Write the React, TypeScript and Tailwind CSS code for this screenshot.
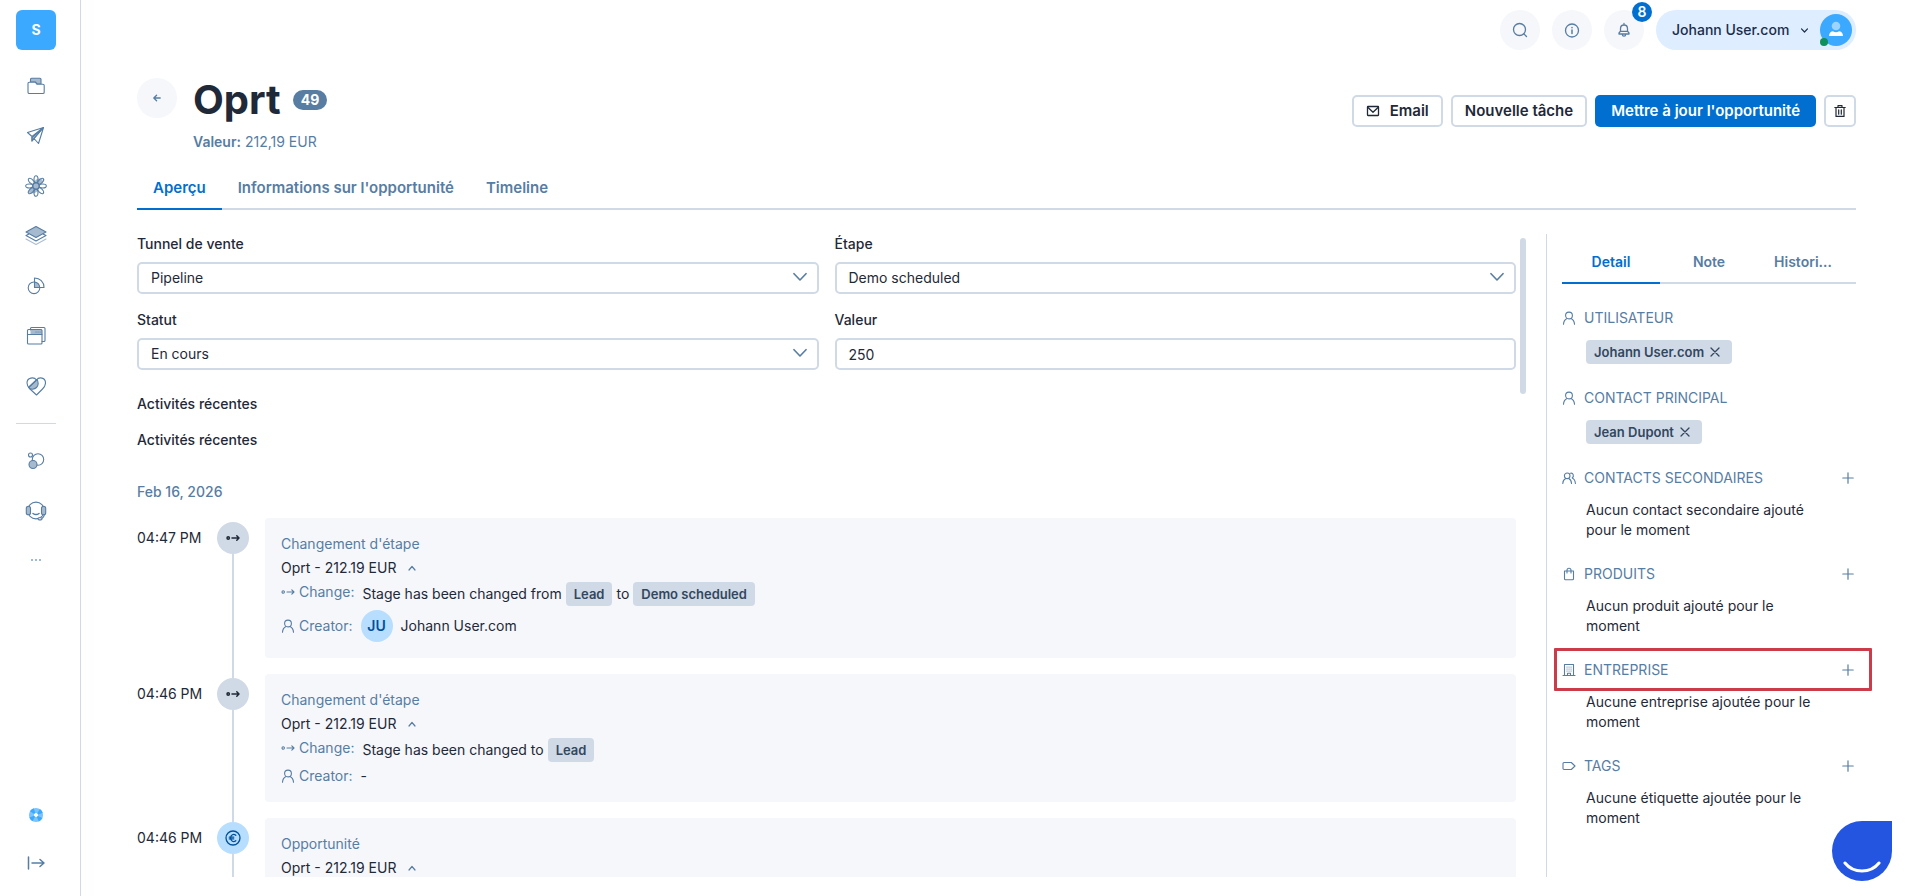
import type { ReactNode } from 'react';

type IconProps = { children: ReactNode; className?: string; box?: string; stroke?: number };

function Icon({ children, className = 'size-5', box = '0 0 20 20', stroke = 1.1 }: IconProps) {
  return (
    <svg
      viewBox={box}
      className={className}
      fill="none"
      stroke="currentColor"
      strokeWidth={stroke}
      strokeLinecap="round"
      strokeLinejoin="round"
      aria-hidden="true"
    >
      {children}
    </svg>
  );
}

const tint = '#a6bace';

const PersonIcon = ({ className = 'size-3.5' }: { className?: string }) => (
  <Icon className={className} box="0 0 14 14">
    <circle cx="7" cy="4.500" r="3.400" />
    <path d="M1.500 13.200c.2-3 1.600-4.800 3.600-5.700M12.500 13.200c-.2-3-1.600-4.800-3.600-5.700" />
  </Icon>
);

const PeopleIcon = () => (
  <Icon className="size-3.5" box="0 0 14 14">
    <circle cx="5.200" cy="4.800" r="2.800" />
    <path d="M.8 12.500c.1-2.600 1.200-4.200 2.900-5M9.500 12.500c-.1-2.600-1.100-4.200-2.800-5M8.500 2.200c2.600-.6 4 2.800 1.700 4.700 2 .9 3 2.600 3.200 5.600" />
  </Icon>
);

const BagIcon = () => (
  <Icon className="size-3.5" box="0 0 14 14">
    <path d="M2.500 4h9v7.700a1 1 0 0 1-1 1h-7a1 1 0 0 1-1-1zM5 6V3.300a2 2 0 0 1 4 0V6" />
  </Icon>
);

const BuildingIcon = () => (
  <Icon className="size-3.5" box="0 0 14 14">
    <path d="M1 12.500h12M2.500 12.500v-11h9v11M5.500 12.500v-2.300h3v2.300" />
    <path d="M5 4h.1M7 4h.1M9 4h.1M5 6h.1M7 6h.1M9 6h.1M5 8h.1M7 8h.1M9 8h.1" />
  </Icon>
);

const TagIcon = () => (
  <Icon className="size-3.5" box="0 0 14 14">
    <path d="M2 3.500h7.300L13 7l-3.700 3.500H2a1 1 0 0 1-1-1v-5a1 1 0 0 1 1-1z" />
  </Icon>
);

const StageIcon = ({ stroke = 1.1 }: { stroke?: number }) => (
  <Icon className="size-3.5" box="0 0 14 14" stroke={stroke}>
    <circle cx="2.200" cy="7" r="1.200" />
    <path d="M6 7h7M10.800 4.800 13 7l-2.200 2.200" />
  </Icon>
);

const ChevronDown = ({ className = 'size-3.5', stroke = 1.6 }: { className?: string; stroke?: number }) => (
  <Icon className={className} box="0 0 14 14" stroke={stroke}>
    <path d="M1 3.700l6 6.300 6-6.300" />
  </Icon>
);

const navIcons: { label: string; icon: ReactNode }[] = [
  {
    label: 'Dossiers',
    icon: (
      <Icon>
        <path d="M4.500 6V3.300a1 1 0 0 1 1-1h8.500a1 1 0 0 1 1 1V8h-4l-1.500-2z" fill={tint} />
        <path d="M2 7.500a1.300 1.300 0 0 1 1.300-1.300h6l1.600 2h6a1.300 1.300 0 0 1 1.300 1.300v6.700a1.300 1.300 0 0 1-1.300 1.300H3.300A1.300 1.300 0 0 1 2 16.200z" fill="#fff" />
      </Icon>
    ),
  },
  {
    label: 'Campagnes',
    icon: (
      <Icon>
        <path d="M17.500 1.500 6 11.500v3.500z" fill={tint} />
        <path d="M17.500 1.500 1.500 6.500 6 10.500zM17.500 1.500 12.500 17.500 8 12.500zM6 10.500V15l2-2.500" />
      </Icon>
    ),
  },
  {
    label: 'Automatisations',
    icon: (
      <Icon className="size-[22px]" box="0 0 22 22">
        <path d="M4.300 17.700c-1.500-2 .5-4.700 2.700-6.200 1.500-4.500 4-8 7.500-8 3.500 0 4 3 2 5.500-1 1.300-2 1.500-2 3-1.500 4-4 8-10.200 5.700z" fill={tint} stroke="none" />
        {[0, 45, 90, 135, 180, 225, 270, 315].map((a) => (
          <ellipse key={a} cx="11" cy="4.300" rx="2" ry="3.600" transform={`rotate(${a} 11 11)`} />
        ))}
        <circle cx="11" cy="11" r="3.200" />
      </Icon>
    ),
  },
  {
    label: 'Contenus',
    icon: (
      <Icon className="size-[22px]" box="0 0 22 22">
        <path d="M1 14l10 5.500L21 14" opacity=".5" />
        <path d="M3.500 9.200 1 10.500 11 16l10-5.500-2.500-1.300" />
        <path d="M11 1.500 21 7l-10 5.500L1 7z" fill={tint} />
      </Icon>
    ),
  },
  {
    label: 'Analyses',
    icon: (
      <Icon>
        <path d="M8.500 5.500a6 6 0 0 1 5.500 6H8.500z" fill={tint} stroke="none" />
        <circle cx="8" cy="11.800" r="5.800" />
        <path d="M8.500 2a9.300 9.300 0 0 1 9.500 9.500H8.500z" />
      </Icon>
    ),
  },
  {
    label: 'Pages',
    icon: (
      <Icon>
        <path d="M4.500 4V2.500a1 1 0 0 1 1-1H18a1 1 0 0 1 1 1v12a1 1 0 0 1-1 1h-2" />
        <path d="M4.500 3.500H16V8H4.500z" fill={tint} stroke="none" />
        <rect x="1.500" y="3.500" width="14.500" height="14.500" rx="1" />
        <path d="M1.500 8.500H16" />
        <path d="M10 6h.1M12 6h.1M14 6h.1" />
      </Icon>
    ),
  },
  {
    label: 'Fidélité',
    icon: (
      <Icon>
        <path d="M2.500 11.500 11 3.500c1.800 2.500 1.500 6-.5 8s-6 2.500-8 0z" fill={tint} />
        <path d="M10.500 4C8 .5 1 1.500 1 7c0 3 1.500 4.500 3 6l6.500 6 6-6c1.500-1.500 3-3 3-6C19.500 1.500 13 .5 10.500 4z" />
        <path d="M2.500 11.500 10 4.500" />
      </Icon>
    ),
  },
];

const extraIcons: { label: string; icon: ReactNode }[] = [
  {
    label: 'Intégrations',
    icon: (
      <Icon>
        <circle cx="12" cy="8.500" r="5.700" />
        <circle cx="4.500" cy="4" r="2" />
        <circle cx="7" cy="13.500" r="4" fill={tint} />
      </Icon>
    ),
  },
  {
    label: 'Assistance',
    icon: (
      <Icon className="size-[22px]" box="0 0 22 22">
        <circle cx="11" cy="10.500" r="8.400" />
        <rect x="1.300" y="6.200" width="4.200" height="8.600" rx="2.100" fill={tint} />
        <rect x="16.500" y="6.200" width="4.200" height="8.600" rx="2.100" fill={tint} />
        <path d="M8 13.500c1.800 1.300 4.200 1.300 6 0" strokeWidth="1.500" />
        <path d="M19.500 14.500c-.5 2.500-2 4-4 4.500" />
        <rect x="13" y="17.700" width="4" height="2.200" rx="1.100" fill="#fff" />
      </Icon>
    ),
  },
];

function Sidebar() {
  return (
    <nav aria-label="Navigation principale" className="flex w-[81px] shrink-0 flex-col border-r border-[#d0dae6] pr-2 pt-2.5">
      <a href="#accueil" className="flex size-10 items-center justify-center self-center rounded-md bg-[#3ba9ff] text-sm font-bold text-white">
        S
      </a>
      <div className="mt-[11px] flex flex-col items-center">
        {navIcons.map(({ label, icon }) => (
          <a key={label} href="#nav" aria-label={label} className="flex h-[50px] w-10 items-center justify-center text-[#577da3]">
            {icon}
          </a>
        ))}
      </div>
      <hr className="mx-4 mt-3 border-[#d0dae6]" />
      <div className="mt-3 flex flex-col items-center">
        {extraIcons.map(({ label, icon }) => (
          <a key={label} href="#nav" aria-label={label} className="flex h-[50px] w-10 items-center justify-center text-[#577da3]">
            {icon}
          </a>
        ))}
        <button type="button" aria-label="Plus" className="flex h-12 w-10 items-center justify-center text-[#9dbbd8]">
          <Icon className="size-3" box="0 0 12 12" stroke={2}>
            <path d="M2 6h.01M6 6h.01M10 6h.01" strokeLinecap="square" />
          </Icon>
        </button>
      </div>
      <div className="mt-auto flex flex-col items-center pb-[9px]">
        <button type="button" aria-label="Aide" className="flex size-12 items-center justify-center">
          <svg viewBox="0 0 16 16" className="size-4" fill="none" aria-hidden="true">
            <circle cx="8" cy="8" r="4.600" stroke="#7cc4ff" strokeWidth="5" />
            <circle cx="8" cy="8" r="4.600" stroke="#3ba9ff" strokeWidth="5" strokeDasharray="3 4.226" strokeDashoffset="-2.100" />
          </svg>
        </button>
        <button type="button" aria-label="Déplier le menu" className="flex size-12 items-center justify-center text-[#577da3]">
          <Icon className="size-5" stroke={1.5}>
            <path d="M2.500 4v12M6 10h12M14 6.500l4 3.500-4 3.500" />
          </Icon>
        </button>
      </div>
    </nav>
  );
}

function TopBar() {
  const round = 'relative flex size-10 items-center justify-center rounded-full bg-[#f5f7fb] text-[#577da3]';
  return (
    <header className="flex justify-end gap-3 pt-2.5">
      <button type="button" aria-label="Rechercher" className={round}>
        <Icon className="size-4" box="0 0 16 16" stroke={1.3}>
          <circle cx="7.500" cy="7.500" r="6" />
          <path d="M11.900 11.900 14.500 14.500" />
        </Icon>
      </button>
      <button type="button" aria-label="Informations" className={round}>
        <Icon className="size-4" box="0 0 16 16" stroke={1.3}>
          <circle cx="8" cy="8.500" r="6.500" />
          <path d="M8 8v3.500M8 5.500v.2" strokeWidth="1.500" />
        </Icon>
      </button>
      <button type="button" aria-label="Notifications" className={round}>
        <Icon className="size-4" box="0 0 16 16" stroke={1.3}>
          <path d="M8 1.500V3M8 3C5.700 3 4.500 4.700 4.500 6.700v2.500L3 11v1h10v-1l-1.500-1.800V6.700C11.500 4.700 10.300 3 8 3zM4.500 9.300h7M6.300 12.300c0 2.500 3.400 2.500 3.400 0" />
        </Icon>
        <span className="absolute -right-2 -top-2 flex size-5 items-center justify-center rounded-full bg-[#006fcf] text-sm font-semibold text-white">8</span>
      </button>
      <button type="button" className="flex h-10 w-[200px] items-center justify-between rounded-full bg-[#deedff] pl-4 pr-1 text-sm font-medium text-[#1a2e4a]">
        Johann User.com
        <span className="flex items-center gap-3">
          <ChevronDown className="size-[7px]" stroke={2.400} />
          <span className="relative">
            <svg viewBox="0 0 32 32" className="size-8" aria-hidden="true">
              <circle cx="16" cy="16" r="16" fill="#3ba9ff" />
              <circle cx="16" cy="12" r="4.300" fill="#9dd3ff" />
              <path d="M9 22c0-3 2-4.700 4-4.700 2 1.200 4 1.200 6 0 2 0 4 1.700 4 4.700z" fill="#fff" />
            </svg>
            <span className="absolute bottom-0 left-0 size-2 rounded-full bg-[#0f8f5b]" />
          </span>
        </span>
      </button>
    </header>
  );
}

function Heading() {
  const outlined = 'flex h-8 items-center rounded-[5px] border-2 border-[#d0dae6] bg-white text-[#1f2937]';
  return (
    <div className="mt-7 flex items-start justify-between">
      <div className="flex gap-4">
        <a href="#retour" aria-label="Retour" className="flex size-10 items-center justify-center rounded-full bg-[#f5f7fb] text-[#577da3]">
          <Icon className="size-2" box="0 0 10 10" stroke={1.600}>
            <path d="M9 5H1.500M4.500 1.500 1 5l3.500 3.500" />
          </Icon>
        </a>
        <div>
          <div className="flex h-11 items-center gap-3">
            <h1 className="text-[40px] font-bold leading-11 text-[#1f2937]">Oprt</h1>
            <span className="flex h-5 items-center rounded-full bg-[#577da3] px-2 text-sm font-bold text-white">49</span>
          </div>
          <p className="mt-2.5 text-sm text-[#577da3]">
            <strong className="font-semibold">Valeur:</strong> 212,19 EUR
          </p>
        </div>
      </div>
      <div className="mt-[17px] flex gap-2 text-[15px] font-semibold">
        <button type="button" className={`${outlined} gap-2.5 px-3`}>
          <Icon className="size-3.5" box="0 0 14 14" stroke={1.300}>
            <rect x="1.500" y="2.500" width="11" height="9" rx=".5" />
            <path d="M2 3.500 7 8.300l5-4.800" />
          </Icon>
          Email
        </button>
        <button type="button" className={`${outlined} px-3`}>Nouvelle tâche</button>
        <button type="button" className="h-8 rounded-[5px] bg-[#006fcf] px-4 text-white">Mettre à jour l'opportunité</button>
        <button type="button" aria-label="Supprimer" className={`${outlined} w-8 justify-center`}>
          <Icon className="size-3.5" box="0 0 14 14" stroke={1.200}>
            <path d="M1.800 3.500h10.400M5 3.500V1.600h4v1.900M3 3.500v8.900h8V3.500M5.700 5.800v4.400M8.300 5.800v4.400" />
          </Icon>
        </button>
      </div>
    </div>
  );
}

function Tabs() {
  return (
    <div role="tablist" className="mt-3.5 flex shrink-0 border-b-2 border-[#d0dae6] text-[15px] font-semibold text-[#577da3]">
      <button type="button" role="tab" aria-selected="true" className="-mb-0.5 h-11 border-b-2 border-[#006fcf] px-4 pt-0.5 text-[#006fcf]">
        Aperçu
      </button>
      <button type="button" role="tab" className="-mb-0.5 h-11 border-b-2 border-transparent px-4 pt-0.5">Informations sur l'opportunité</button>
      <button type="button" role="tab" className="-mb-0.5 h-11 border-b-2 border-transparent px-4 pt-0.5">Timeline</button>
    </div>
  );
}

const fieldBox = 'h-8 w-full appearance-none rounded-[5px] border-2 border-[#d0dae6] bg-white px-3 text-sm text-[#1f2937]';

function SelectField({ id, label, value }: { id: string; label: string; value: string }) {
  return (
    <div>
      <label htmlFor={id} className="block text-sm font-medium">{label}</label>
      <div className="relative mt-2">
        <select id={id} defaultValue={value} className={fieldBox}>
          <option>{value}</option>
        </select>
        <span className="pointer-events-none absolute right-3 top-2 text-[#577da3]">
          <ChevronDown />
        </span>
      </div>
    </div>
  );
}

const Chip = ({ children }: { children: ReactNode }) => (
  <span className="inline-flex h-6 items-center rounded bg-[#d0dae6] px-2 text-[13px] font-semibold text-[#33475f]">{children}</span>
);

type EventProps = { time: string; title: string; tone: 'grey' | 'blue'; icon: ReactNode; children?: ReactNode };

function Event({ time, title, tone, icon, children }: EventProps) {
  return (
    <li className="group flex">
      <time className="mt-2.5 w-20 shrink-0 text-sm">{time}</time>
      <div className="flex w-8 shrink-0 flex-col items-center">
        <span className="h-1 w-0.5 bg-[#d0dae6] group-first:bg-transparent" />
        <span className={`flex size-8 items-center justify-center rounded-full ${tone === 'blue' ? 'bg-[#b8deff] text-[#00509a]' : 'bg-[#d0dae6] text-[#1f2937]'}`}>
          {icon}
        </span>
        <span className="w-0.5 flex-1 bg-[#d0dae6]" />
      </div>
      <div className="min-w-0 flex-1 pb-4 pl-4">
        <div className="flex flex-col gap-1 rounded bg-[#f5f7fb] p-4 text-sm">
          <p className="text-[#577da3]">{title}</p>
          <button type="button" className="flex h-5 items-center gap-3">
            Oprt - 212.19 EUR
            <Icon className="size-2 text-[#577da3]" box="0 0 8 8" stroke={1.200}>
              <path d="M1 6 4 2.500 7 6" />
            </Icon>
          </button>
          {children}
        </div>
      </div>
    </li>
  );
}

const RowLabel = ({ icon, children }: { icon: ReactNode; children: ReactNode }) => (
  <span className="flex h-5 items-center gap-1 text-[#577da3]">
    {icon}
    {children}
  </span>
);

function Timeline() {
  return (
    <ol className="mt-4">
      <Event time="04:47 PM" title="Changement d'étape" tone="grey" icon={<StageIcon stroke={1.500} />}>
        <div className="flex items-start gap-2">
          <RowLabel icon={<StageIcon />}>Change:</RowLabel>
          <span className="flex items-center gap-1">
            Stage has been changed from <Chip>Lead</Chip> to <Chip>Demo scheduled</Chip>
          </span>
        </div>
        <div className="flex items-center gap-2">
          <RowLabel icon={<PersonIcon />}>Creator:</RowLabel>
          <span className="flex size-8 items-center justify-center rounded-full bg-[#b8deff] font-semibold text-[#00509a]">JU</span>
          Johann User.com
        </div>
      </Event>
      <Event time="04:46 PM" title="Changement d'étape" tone="grey" icon={<StageIcon stroke={1.500} />}>
        <div className="flex items-start gap-2">
          <RowLabel icon={<StageIcon />}>Change:</RowLabel>
          <span className="flex items-center gap-1">
            Stage has been changed to <Chip>Lead</Chip>
          </span>
        </div>
        <div className="flex items-center gap-2">
          <RowLabel icon={<PersonIcon />}>Creator:</RowLabel>-
        </div>
      </Event>
      <Event
        time="04:46 PM"
        title="Opportunité"
        tone="blue"
        icon={
          <Icon className="size-4" box="0 0 16 16" stroke={1.300}>
            <circle cx="8" cy="8" r="7" />
            <path d="M10.800 5.300C8.500 3.300 5.600 5 5.600 8s2.900 4.700 5.200 2.700M4.300 7.200h4.400M4.300 8.900h4.400" />
          </Icon>
        }
      />
    </ol>
  );
}

function Overview() {
  return (
    <div className="flex min-w-0 flex-1 gap-1">
      <div className="min-w-0 flex-1 overflow-hidden">
        <div className="grid grid-cols-2 gap-4">
          <SelectField id="tunnel" label="Tunnel de vente" value="Pipeline" />
          <SelectField id="etape" label="Étape" value="Demo scheduled" />
          <SelectField id="statut" label="Statut" value="En cours" />
          <div>
            <label htmlFor="valeur" className="block text-sm font-medium">Valeur</label>
            <input id="valeur" type="text" defaultValue="250" className={`${fieldBox} mt-2 block`} />
          </div>
        </div>
        <h2 className="mt-6 text-sm font-medium">Activités récentes</h2>
        <h3 className="mt-4 text-sm font-medium">Activités récentes</h3>
        <p className="mt-8 text-sm font-medium text-[#577da3]">Feb 16, 2026</p>
        <Timeline />
      </div>
      <div className="mt-1 h-[156px] w-1.5 rounded-full bg-[#d0dae6]" />
    </div>
  );
}

type SectionProps = { icon: ReactNode; title: string; add?: boolean; highlight?: boolean; children: ReactNode };

function Section({ icon, title, add, highlight, children }: SectionProps) {
  return (
    <section className="mt-6">
      <h3 className="relative flex h-5 items-center gap-2 text-sm text-[#577da3]">
        {icon}
        {title}
        {add && (
          <button type="button" aria-label={`Ajouter ${title}`} className="ml-auto mr-0.5">
            <Icon className="size-3" box="0 0 12 12" stroke={1.200}>
              <path d="M6 .8v10.400M.8 6h10.400" />
            </Icon>
          </button>
        )}
        {highlight && <span className="pointer-events-none absolute -bottom-[11px] -left-2 -right-4 -top-3 rounded-[1px] border-3 border-[#cb3b49]" />}
      </h3>
      <div className="mt-3 pl-6 pr-8 text-sm">{children}</div>
    </section>
  );
}

const RemovableChip = ({ name }: { name: string }) => (
  <span className="flex h-6 w-fit items-center gap-1.5 rounded bg-[#d0dae6] px-2 text-[13px] font-semibold text-[#33475f]">
    {name}
    <button type="button" aria-label={`Retirer ${name}`} className="pr-1">
      <Icon className="size-2.5" box="0 0 10 10" stroke={1.300}>
        <path d="M1 1l8 8M9 1 1 9" />
      </Icon>
    </button>
  </span>
);

function Details() {
  return (
    <aside className="w-[310px] shrink-0 border-l border-[#d0dae6] pl-[15px] pt-1.5">
      <div role="tablist" className="grid h-11 grid-cols-3 border-b-2 border-[#d0dae6] text-sm font-semibold text-[#577da3]">
        <button type="button" role="tab" aria-selected="true" className="-mb-0.5 border-b-2 border-[#006fcf] pt-0.5 text-[#006fcf]">
          Detail
        </button>
        <button type="button" role="tab" className="pt-0.5">Note</button>
        <button type="button" role="tab" className="truncate pr-2 pt-0.5">Histori…</button>
      </div>
      <Section icon={<PersonIcon />} title="UTILISATEUR">
        <RemovableChip name="Johann User.com" />
      </Section>
      <Section icon={<PersonIcon />} title="CONTACT PRINCIPAL">
        <RemovableChip name="Jean Dupont" />
      </Section>
      <Section icon={<PeopleIcon />} title="CONTACTS SECONDAIRES" add>
        Aucun contact secondaire ajouté pour le moment
      </Section>
      <Section icon={<BagIcon />} title="PRODUITS" add>
        Aucun produit ajouté pour le moment
      </Section>
      <Section icon={<BuildingIcon />} title="ENTREPRISE" add highlight>
        Aucune entreprise ajoutée pour le moment
      </Section>
      <Section icon={<TagIcon />} title="TAGS" add>
        Aucune étiquette ajoutée pour le moment
      </Section>
    </aside>
  );
}

export default function App() {
  return (
    <div className="flex h-screen bg-white font-['Inter',sans-serif] text-[#1f2937]">
      <Sidebar />
      <main className="flex min-w-0 flex-1 flex-col pb-[19px] pl-14 pr-[49px]">
        <TopBar />
        <Heading />
        <Tabs />
        <div className="mt-6 flex min-h-0 flex-1 gap-5">
          <Overview />
          <Details />
        </div>
      </main>
      <button type="button" aria-label="Ouvrir la messagerie" className="fixed bottom-[15px] right-[13px] flex size-15 items-end justify-center rounded-full rounded-tr-none bg-[#2455e0] pb-2">
        <svg viewBox="0 0 38 12" className="h-3 w-[38px]" fill="none" stroke="#fff" strokeWidth="3" strokeLinecap="round" aria-hidden="true">
          <path d="M2 2c4 5 10 8 17 8s13-3 17-8" />
        </svg>
      </button>
    </div>
  );
}
